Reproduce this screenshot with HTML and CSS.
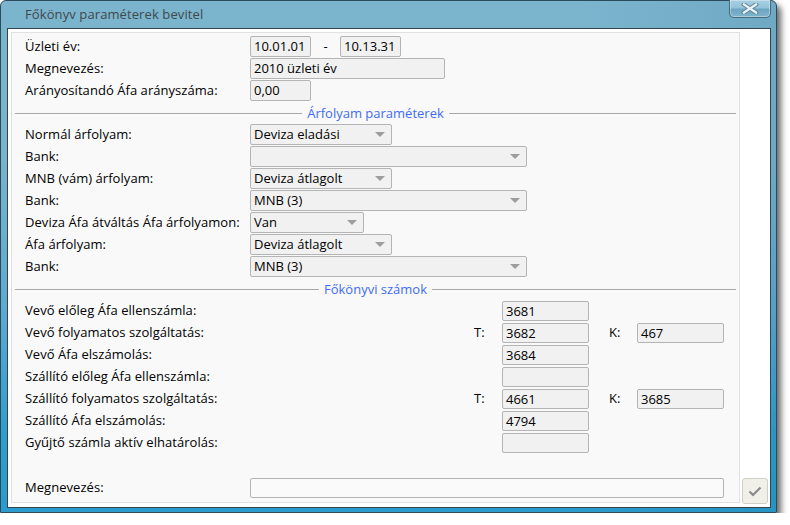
FILE: index.html
```html
<!DOCTYPE html>
<html lang="hu">
<head>
<meta charset="utf-8">
<title>Főkönyv paraméterek bevitel</title>
<link rel="stylesheet" href="styles.css">
</head>
<body>
<div class="window">
  <div class="titlebar">
    <span class="title">Főkönyv paraméterek bevitel</span>
    <div class="close">
      <svg width="18" height="11" viewBox="0 0 18 11">
        <path d="M3 1.5 L15 9.5 M15 1.5 L3 9.5" stroke="#5a8194" stroke-width="4.2" stroke-linecap="square"/>
        <path d="M3 1.5 L15 9.5 M15 1.5 L3 9.5" stroke="#e9f3f7" stroke-width="2.4" stroke-linecap="square"/>
      </svg>
    </div>
  </div>
  <div class="client">
    <div class="panel">
      <div class="row">
        <span class="lbl">Üzleti év:</span>
        <span class="field w61">10.01.01</span>
        <span class="dash">-</span>
        <span class="field w61">10.13.31</span>
      </div>
      <div class="row">
        <span class="lbl">Megnevezés:</span>
        <span class="field w195">2010 üzleti év</span>
      </div>
      <div class="row">
        <span class="lbl">Arányosítandó Áfa arányszáma:</span>
        <span class="field w61">0,00</span>
      </div>

      <div class="sep"><span>Árfolyam paraméterek</span></div>

      <div class="row">
        <span class="lbl">Normál árfolyam:</span>
        <span class="field combo w142">Deviza eladási</span>
      </div>
      <div class="row">
        <span class="lbl">Bank:</span>
        <span class="field combo w277"></span>
      </div>
      <div class="row">
        <span class="lbl">MNB (vám) árfolyam:</span>
        <span class="field combo w142">Deviza átlagolt</span>
      </div>
      <div class="row">
        <span class="lbl">Bank:</span>
        <span class="field combo w277">MNB (3)</span>
      </div>
      <div class="row">
        <span class="lbl">Deviza Áfa átváltás Áfa árfolyamon:</span>
        <span class="field combo w114">Van</span>
      </div>
      <div class="row">
        <span class="lbl">Áfa árfolyam:</span>
        <span class="field combo w142">Deviza átlagolt</span>
      </div>
      <div class="row">
        <span class="lbl">Bank:</span>
        <span class="field combo w277">MNB (3)</span>
      </div>

      <div class="sep"><span>Főkönyvi számok</span></div>

      <div class="acc">
        <span class="lbl">Vevő előleg Áfa ellenszámla:</span>
        <span class="field c-t">3681</span>
      </div>
      <div class="acc">
        <span class="lbl">Vevő folyamatos szolgáltatás:</span>
        <span class="tk">T:</span>
        <span class="field c-t">3682</span>
        <span class="kk">K:</span>
        <span class="field c-k">467</span>
      </div>
      <div class="acc">
        <span class="lbl">Vevő Áfa elszámolás:</span>
        <span class="field c-t">3684</span>
      </div>
      <div class="acc">
        <span class="lbl">Szállító előleg Áfa ellenszámla:</span>
        <span class="field c-t"></span>
      </div>
      <div class="acc">
        <span class="lbl">Szállító folyamatos szolgáltatás:</span>
        <span class="tk">T:</span>
        <span class="field c-t">4661</span>
        <span class="kk">K:</span>
        <span class="field c-k">3685</span>
      </div>
      <div class="acc">
        <span class="lbl">Szállító Áfa elszámolás:</span>
        <span class="field c-t">4794</span>
      </div>
      <div class="acc">
        <span class="lbl">Gyűjtő számla aktív elhatárolás:</span>
        <span class="field c-t"></span>
      </div>

      <div class="row bottom">
        <span class="lbl">Megnevezés:</span>
        <span class="field edit w474"></span>
      </div>
    </div>
    <div class="side">
      <button class="ok" type="button" aria-label="OK">
        <svg width="14" height="11" viewBox="0 0 14 11">
          <path d="M1.5 5.5 L5 9 L12.5 1.5" fill="none" stroke="#8a8a8a" stroke-width="2.2"/>
        </svg>
      </button>
    </div>
  </div>
</div>
</body>
</html>
```

FILE: styles.css
```css
* { box-sizing: border-box; }

body {
  margin: 0;
  background: #ffffff;
  font-family: "Open Sans", "Noto Sans", sans-serif;
  font-size: 13px;
  color: #000;
}

.window {
  position: relative;
  width: 777px;
  height: 513px;
  border: 1px solid #2d4a5c;
  border-radius: 6px 6px 0 0;
  padding: 0 5px 4px 6px;
  background:
    linear-gradient(to right, rgba(0, 0, 0, 0) 0%, rgba(0, 0, 0, 0) 75%, rgba(20, 90, 130, 0.12) 100%),
    linear-gradient(to bottom, #7bb4cd 0%, #7ab3cc 30%, #5eaad0 60%, #2f9dce 85%, #2a9bcc 100%);
  box-shadow: 4px 5px 6px rgba(0, 0, 0, 0.6);
  display: flex;
  flex-direction: column;
}

.titlebar {
  height: 27px;
  display: flex;
  align-items: center;
  padding-left: 18px;
  padding-bottom: 1px;
}

.title {
  color: #41484c;
  font-size: 13px;
  letter-spacing: 0.1px;
}

.close {
  position: absolute;
  top: -1px;
  right: 5px;
  width: 42px;
  height: 18px;
  border: 1px solid #466a7e;
  border-top: none;
  border-radius: 0 0 5px 5px;
  background: linear-gradient(to bottom, #a8d0e2 0%, #95c3d8 45%, #6ea6c1 55%, #7fb4cc 100%);
  box-shadow: inset 0 0 0 1px rgba(255, 255, 255, 0.35);
  display: flex;
  align-items: center;
  justify-content: center;
}

.client {
  flex: 1;
  display: flex;
  border: 1px solid #34444e;
  background: #ffffff;
}

.panel {
  width: 729px;
  margin: 3px 0 4px 3px;
  border: 1px solid #e1e1e1;
  background: #f9f9f9;
  padding: 3px 0 3px 13px;
  display: flex;
  flex-direction: column;
}

.side {
  flex: 1;
  display: flex;
  align-items: flex-end;
  padding: 0 2px 3px 2px;
}

.ok {
  width: 26px;
  height: 26px;
  padding: 0;
  border: 1px solid #cfcfc6;
  border-radius: 3px;
  background: #f1f0e8;
  display: flex;
  align-items: center;
  justify-content: center;
}

.row {
  height: 22px;
  display: flex;
  align-items: flex-start;
}

.lbl {
  width: 225px;
  line-height: 21px;
  white-space: nowrap;
  letter-spacing: 0.05px;
}

.field {
  position: relative;
  display: block;
  height: 21px;
  border: 1px solid #b4b4b4;
  border-radius: 2px;
  background: #f1f1f1;
  line-height: 19px;
  padding: 0 3px;
  white-space: nowrap;
  overflow: hidden;
}

.w61 { width: 61px; }
.w114 { width: 114px; }
.w142 { width: 142px; }
.w195 { width: 195px; }
.w277 { width: 277px; }
.w474 { width: 474px; }

.dash {
  width: 29px;
  text-align: center;
  line-height: 21px;
}

.combo::after {
  content: "";
  position: absolute;
  right: 6px;
  top: 7px;
  border-left: 5px solid transparent;
  border-right: 5px solid transparent;
  border-top: 5px solid #9d9d9d;
}

.edit {
  background: #fafafa;
  height: 20px;
  margin-top: 1px;
}

.sep {
  height: 22px;
  margin-left: -10px;
  margin-right: 3px;
  display: flex;
  align-items: center;
  color: #3f6cf4;
}

.sep::before,
.sep::after {
  content: "";
  flex: 1;
  height: 1px;
  background: #a8a8a8;
}

.sep span {
  padding: 0 5px;
  line-height: 20px;
}

.acc {
  height: 22px;
  display: grid;
  grid-template-columns: 449px 28px 87px 20px 28px 87px;
  align-items: start;
}

.acc .lbl { grid-column: 1; width: auto; }
.acc .tk { grid-column: 2; line-height: 21px; }
.acc .kk { grid-column: 5; line-height: 21px; }
.acc .c-t { grid-column: 3; height: 20px; margin-top: 1px; line-height: 18px; }
.acc .c-k { grid-column: 6; height: 20px; margin-top: 1px; line-height: 18px; }

.bottom {
  margin-top: auto;
}
```
